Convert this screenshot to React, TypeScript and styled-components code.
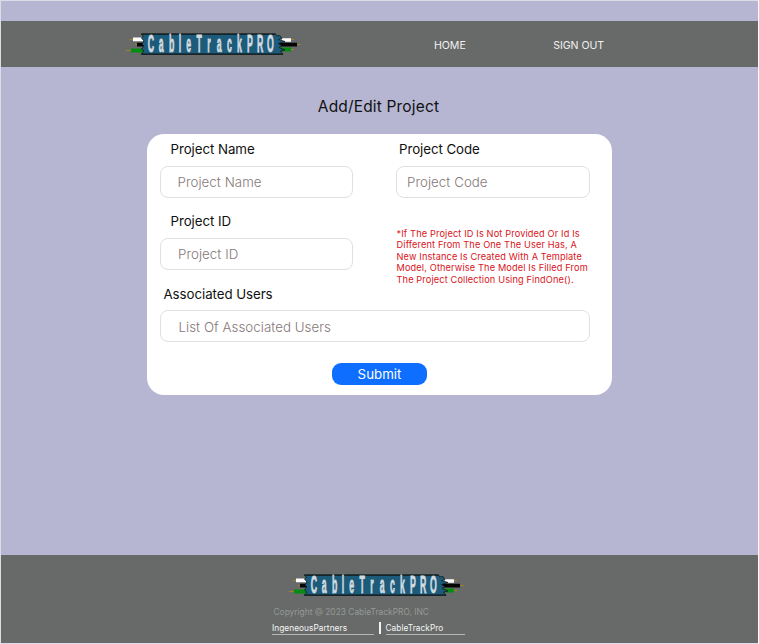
import React from "react";
import styled, { createGlobalStyle } from "styled-components";

const GlobalStyle = createGlobalStyle`
  * { box-sizing: border-box; }
  body { margin: 0; background: #fff; font-family: Inter, "Liberation Sans", sans-serif; }
`;

const Page = styled.div`
  display: flex;
  flex-direction: column;
  width: 757.5px;
  height: 644px;
  padding-top: 20px;
  background: #b6b6d3;
  border: solid #dcdce6;
  border-width: 1px 0 1px 1px;
  overflow: hidden;
`;

const Header = styled.header`
  display: flex;
  flex: none;
  align-items: flex-start;
  height: 46px;
  background: #676a68;
  padding: 10px 0 0 125px;
`;

const Nav = styled.nav`
  display: flex;
  padding-top: 7px;
  margin-left: 133px;
  gap: 87.5px;
`;

const NavLink = styled.a`
  color: #f1f1f1;
  font-size: 10.6px;
  line-height: 16px;
  letter-spacing: -0.05px;
`;

const Main = styled.main`
  flex: 1;
  padding-left: 145.5px;
`;

const Title = styled.h1`
  width: 464px;
  margin: 30px 0 17px;
  text-align: center;
  font-size: 15.5px;
  line-height: 20px;
  font-weight: 400;
  letter-spacing: 0.16px;
  color: #111;
`;

const Card = styled.form`
  display: grid;
  grid-template-columns: 193px 193.5px;
  grid-template-rows: 72px 72.5px 72.5px auto;
  column-gap: 43px;
  width: 465px;
  height: 261px;
  padding: 6px 0 0 13.5px;
  background: #fff;
  border-radius: 17px;
`;

const Field = styled.label<{ $wide?: boolean; $indent: number }>`
  display: flex;
  flex-direction: column;
  grid-column: ${(p) => (p.$wide ? "1 / -1" : "auto")};
  font-size: 13.3px;
  line-height: 19px;
  letter-spacing: -0.06px;
  color: #111;

  span { padding-left: ${(p) => p.$indent}px; }
`;

const Input = styled.input<{ $indent: number }>`
  width: 100%;
  height: 32px;
  margin-top: 6.8px;
  padding: 1px 0 0 ${(p) => p.$indent}px;
  border: 1px solid #e0e0e0;
  border-radius: 8px;
  background: #fff;
  font: 300 13.3px Inter, sans-serif;
  letter-spacing: 0.05px;
  outline: 0;
  &::placeholder { color: #857878; opacity: 1; }
`;

const Note = styled.p`
  margin: 15.5px -10px 0 0.5px;
  font-size: 9.2px;
  line-height: 11.6px;
  letter-spacing: 0.14px;
  color: #d9141b;
  white-space: pre;
`;

const Submit = styled.button`
  width: 95px;
  height: 22px;
  margin: 5.5px 0 0 171.5px;
  padding: 0 0 0 1px;
  border: 0;
  border-radius: 9px;
  background: #0d6eff;
  color: #fff;
  font: 400 13.3px/22px Inter, sans-serif;
`;

const Footer = styled.footer`
  flex: none;
  height: 88px;
  padding: 17px 0 0 271px;
  background: #676a68;
`;

const FooterLogo = styled.div`
  height: 27px;
  padding-left: 16.5px;
`;

const Copyright = styled.p`
  margin: 6.5px 0 4.5px 1.5px;
  font-size: 8.4px;
  line-height: 12px;
  color: #969997;
`;

const Links = styled.div`
  display: flex;
  align-items: flex-start;
`;

const FooterLink = styled.a<{ $width: number }>`
  width: ${(p) => p.$width}px;
  height: 12.5px;
  border-bottom: 1px solid #b5b7b6;
  color: #f5f5f5;
  font-size: 8.3px;
  line-height: 12px;
  letter-spacing: 0.05px;
`;

const Divider = styled.i`
  width: 2px;
  height: 12px;
  margin: 0 4.5px 0 5px;
  background: #f2f2f2;
`;

const LogoSvg = styled.svg`
  display: block;
  flex: none;
`;

const letters: [string, number][] = [
  ["C", 25], ["a", 35.3], ["b", 45.6], ["l", 54], ["e", 62.7], ["T", 73.2], ["r", 83],
  ["a", 93.2], ["c", 103.5], ["k", 113.5], ["P", 124], ["R", 134.2], ["O", 144.5],
];

function Logo() {
  return (
    <LogoSvg width="175" height="27" viewBox="0 0 175 27" role="img" aria-label="CableTrackPRO">
      <path
        d="M4 8.5H8M9 13.5H12M0 19.5H5M164 8.5H168M170 13.5H174.5M163 18.5H168"
        stroke="#a08420"
        strokeWidth="1.2"
      />
      <path d="M7 6.6H19V10.2H7zM153 7.2H165V10.8H153z" fill="#fff" />
      <path d="M11 11.8H19V15.4H11zM153 11.8H171V15.4H153z" fill="#050505" />
      <path d="M5 17.6H19V21.4H5zM153 16.4H165V20.4H153z" fill="#058d11" />
      <path
        d="M15 3H149.5L151 5L154 4.5L156 8L152.5 8.5L159 10.5L152.5 12.5L156 15L153 16.5L159 19L154.5 20L157 23.3H15L18 20L15.5 18L18 15L16 13L18 10L15.5 7L17.5 5Z"
        fill="#1c5c7a"
        stroke="#101b20"
        strokeWidth="0.8"
      />
      <path d="M16 3.2H149.5M16 23.2H157" stroke="#151c1e" strokeWidth="1.2" />
      <g
        fill="#d3dae0"
        stroke="#d3dae0"
        strokeWidth="0.8"
        fontFamily="Liberation Sans"
        fontWeight="700"
        fontSize="23"
        textAnchor="middle"
      >
        {letters.map(([letter, x]) => (
          <text key={x} transform={`translate(${x} 21.3) scale(0.38 1)`}>{letter}</text>
        ))}
      </g>
    </LogoSvg>
  );
}

export default function App() {
  return (
    <>
      <GlobalStyle />
      <Page>
        <Header>
          <Logo />
          <Nav>
            <NavLink>HOME</NavLink>
            <NavLink>SIGN OUT</NavLink>
          </Nav>
        </Header>
        <Main>
          <Title>Add/Edit Project</Title>
          <Card>
            <Field $indent={10.5}>
              <span>Project Name</span>
              <Input $indent={16.5} placeholder="Project Name" />
            </Field>
            <Field $indent={3}>
              <span>Project Code</span>
              <Input $indent={10} placeholder="Project Code" />
            </Field>
            <Field $indent={10.5}>
              <span>Project ID</span>
              <Input $indent={17} placeholder="Project ID" />
            </Field>
            <Note>{`*If The Project ID Is Not Provided Or Id Is
Different From The One The User Has, A
New Instance Is Created With A Template
Model, Otherwise The Model Is Filled From
The Project Collection Using FindOne().`}</Note>
            <Field $wide $indent={3.5}>
              <span>Associated Users</span>
              <Input $indent={17.5} placeholder="List Of Associated Users" />
            </Field>
            <Submit type="button">Submit</Submit>
          </Card>
        </Main>
        <Footer>
          <FooterLogo>
            <Logo />
          </FooterLogo>
          <Copyright>Copyright @ 2023 CableTrackPRO, INC</Copyright>
          <Links>
            <FooterLink $width={102}>IngeneousPartners</FooterLink>
            <Divider />
            <FooterLink $width={79}>CableTrackPro</FooterLink>
          </Links>
        </Footer>
      </Page>
    </>
  );
}
